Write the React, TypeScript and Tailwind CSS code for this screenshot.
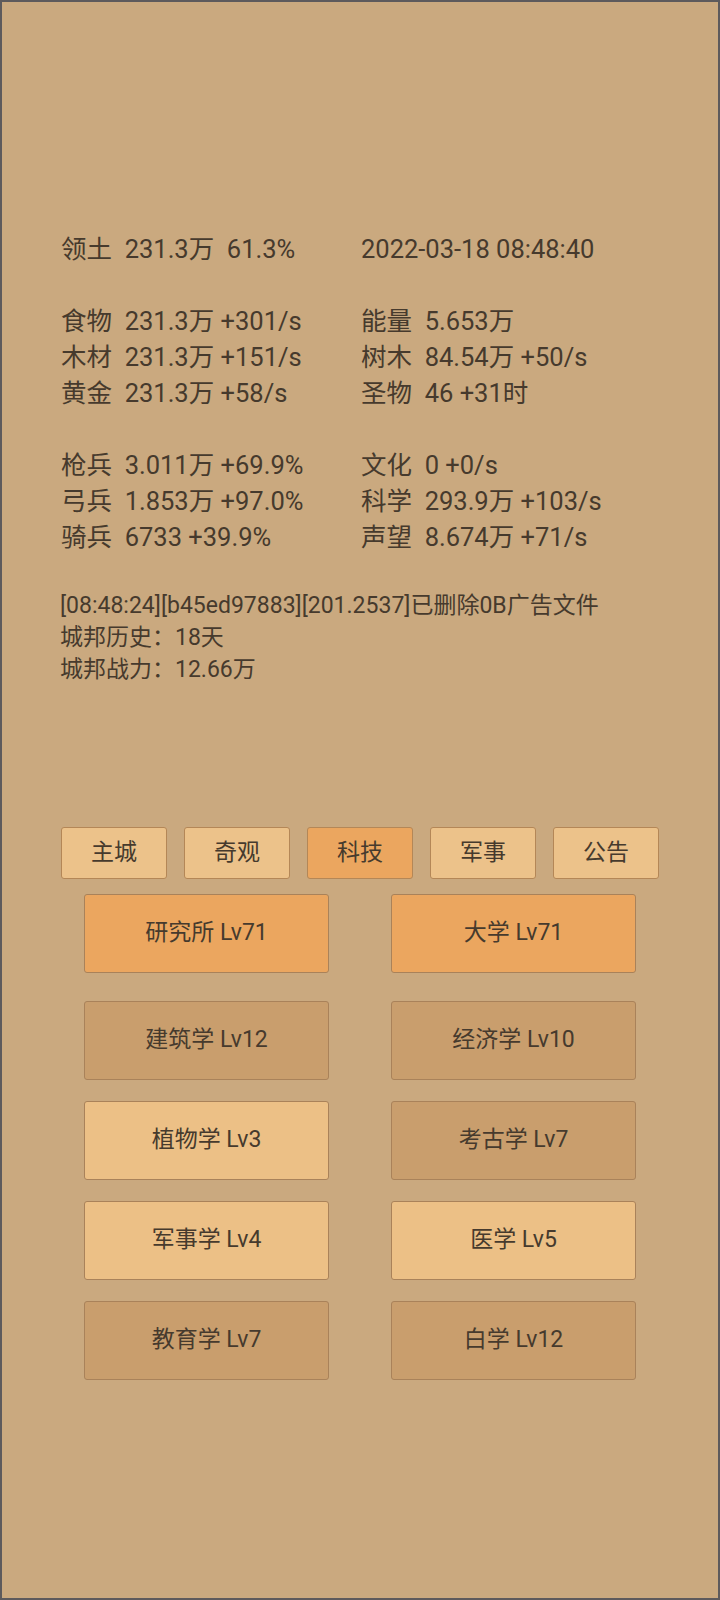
import React from 'react';

const font = { fontFamily: 'Roboto, "Noto Sans CJK SC", sans-serif' };

// left / right stat columns, '' = blank line
const leftLines = [
  '领土  231.3万  61.3%',
  '',
  '食物  231.3万 +301/s',
  '木材  231.3万 +151/s',
  '黄金  231.3万 +58/s',
  '',
  '枪兵  3.011万 +69.9%',
  '弓兵  1.853万 +97.0%',
  '骑兵  6733 +39.9%',
];

const rightLines = [
  '2022-03-18 08:48:40',
  '',
  '能量  5.653万',
  '树木  84.54万 +50/s',
  '圣物  46 +31时',
  '',
  '文化  0 +0/s',
  '科学  293.9万 +103/s',
  '声望  8.674万 +71/s',
];

const logLines = [
  '[08:48:24][b45ed97883][201.2537]已删除0B广告文件',
  '城邦历史：18天',
  '城邦战力：12.66万',
];

const tabs = [
  { name: '主城', active: false },
  { name: '奇观', active: false },
  { name: '科技', active: true },
  { name: '军事', active: false },
  { name: '公告', active: false },
];

type Tone = 'orange' | 'light' | 'dark';

const buildings: { name: string; tone: Tone }[][] = [
  [
    { name: '研究所 Lv71', tone: 'orange' },
    { name: '大学 Lv71', tone: 'orange' },
  ],
  [
    { name: '建筑学 Lv12', tone: 'dark' },
    { name: '经济学 Lv10', tone: 'dark' },
  ],
  [
    { name: '植物学 Lv3', tone: 'light' },
    { name: '考古学 Lv7', tone: 'dark' },
  ],
  [
    { name: '军事学 Lv4', tone: 'light' },
    { name: '医学 Lv5', tone: 'light' },
  ],
  [
    { name: '教育学 Lv7', tone: 'dark' },
    { name: '白学 Lv12', tone: 'dark' },
  ],
];

const toneClass: Record<Tone, string> = {
  orange: 'bg-[#eba65f]',
  light: 'bg-[#ecc086]',
  dark: 'bg-[#c99e6d]',
};

function StatColumn({ lines }: { lines: string[] }) {
  return (
    <div className="flex flex-col">
      {lines.map((line, i) => (
        <div key={i} className="h-[36px] whitespace-pre text-[25.5px] leading-[36px]">
          {line}
        </div>
      ))}
    </div>
  );
}

function App() {
  return (
    <div
      className="flex h-[1600px] w-[720px] flex-col border-2 border-[#5d5a5c] bg-[#caa97f] text-[#463a2d]"
      style={font}
    >
      <div className="mt-[229px] grid grid-cols-[300px_1fr] pl-[59px]">
        <StatColumn lines={leftLines} />
        <StatColumn lines={rightLines} />
      </div>

      <div className="mt-[35px] flex flex-col pl-[58px]">
        {logLines.map((line, i) => (
          <div key={i} className="h-[32px] whitespace-pre text-[23px] leading-[32px]">
            {line}
          </div>
        ))}
      </div>

      <div className="mt-[141px] flex justify-center gap-[17px]">
        {tabs.map((tab) => (
          <div
            key={tab.name}
            className={`flex h-[52px] w-[106px] items-center justify-center rounded-[3px] border border-[#b48757] text-[23px] ${
              tab.active ? 'bg-[#eba65f]' : 'bg-[#ecc28a]'
            }`}
          >
            {tab.name}
          </div>
        ))}
      </div>

      <div className="mt-[15px] flex flex-col items-center">
        {buildings.map((row, i) => (
          <div key={i} className={`flex gap-[62px] ${i === 0 ? 'mb-[28px]' : 'mb-[21px]'}`}>
            {row.map((b) => (
              <div
                key={b.name}
                className={`flex h-[79px] w-[245px] items-center justify-center rounded-[3px] border border-[#a9825a] text-[23px] ${toneClass[b.tone]}`}
              >
                {b.name}
              </div>
            ))}
          </div>
        ))}
      </div>
    </div>
  );
}

export default App;
